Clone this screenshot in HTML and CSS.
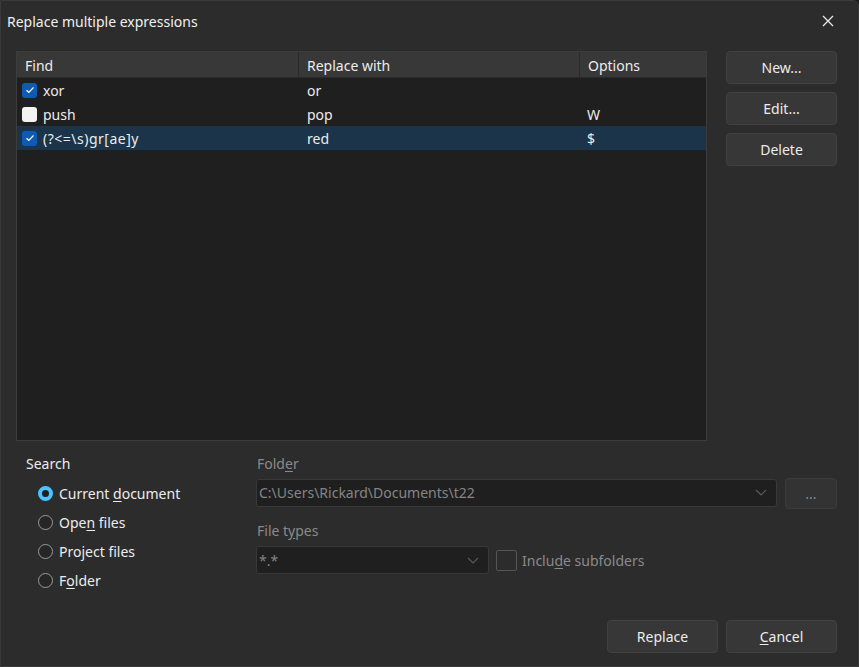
FILE: index.html
```html
<!DOCTYPE html>
<html>
<head>
<meta charset="utf-8">
<link rel="stylesheet" href="styles.css">
</head>
<body>
<div class="window">
  <div class="titlebar">
    <span class="title">Replace multiple expressions</span>
    <svg class="close" width="12" height="12" viewBox="0 0 12 12"><path d="M1 1L11 11M11 1L1 11" stroke="#e8e8e8" stroke-width="1.3" fill="none"/></svg>
  </div>
  <div class="top">
    <div class="table">
      <div class="thead">
        <div class="th c1">Find</div>
        <div class="th c2">Replace with</div>
        <div class="th c3">Options</div>
      </div>
      <div class="row">
        <div class="td c1"><span class="cb on"><svg width="10" height="8" viewBox="0 0 10 8"><path d="M1.5 4.2L3.8 6.3L8.5 1.5" stroke="#fff" stroke-width="1.2" fill="none"/></svg></span><span>xor</span></div>
        <div class="td c2">or</div>
        <div class="td c3"></div>
      </div>
      <div class="row">
        <div class="td c1"><span class="cb off"></span><span>push</span></div>
        <div class="td c2">pop</div>
        <div class="td c3">W</div>
      </div>
      <div class="row sel">
        <div class="td c1"><span class="cb on"><svg width="10" height="8" viewBox="0 0 10 8"><path d="M1.5 4.2L3.8 6.3L8.5 1.5" stroke="#fff" stroke-width="1.2" fill="none"/></svg></span><span class="rx">(?&lt;=\s)gr[ae]y</span></div>
        <div class="td c2">red</div>
        <div class="td c3">$</div>
      </div>
    </div>
    <div class="side">
      <button class="btn">New...</button>
      <button class="btn">Edit...</button>
      <button class="btn">Delete</button>
    </div>
  </div>
  <div class="bottom">
    <div class="search">
      <div class="label">Search</div>
      <div class="radios">
        <div class="radio"><span class="rb on"></span><span>Current <u>d</u>ocument</span></div>
        <div class="radio"><span class="rb"></span><span>Ope<u>n</u> files</span></div>
        <div class="radio"><span class="rb"></span><span>Pro<u>j</u>ect files</span></div>
        <div class="radio"><span class="rb"></span><span>F<u>o</u>lder</span></div>
      </div>
    </div>
    <div class="folder">
      <div class="label dim">Fold<u>e</u>r</div>
      <div class="frow first">
        <div class="combo wide"><span>C:\Users\Rickard\Documents\t22</span><svg width="12" height="7" viewBox="0 0 12 7"><path d="M1 1L6 6L11 1" stroke="#5a5a5a" stroke-width="1.2" fill="none"/></svg></div>
        <button class="btn small dimbtn">...</button>
      </div>
      <div class="label dim ft">File t<u>y</u>pes</div>
      <div class="frow">
        <div class="combo narrow"><span>*.*</span><svg width="12" height="7" viewBox="0 0 12 7"><path d="M1 1L6 6L11 1" stroke="#5a5a5a" stroke-width="1.2" fill="none"/></svg></div>
        <span class="cb2"></span><span class="dimtext">Inclu<u>d</u>e subfolders</span>
      </div>
    </div>
  </div>
  <div class="footer">
    <button class="btn">Replace</button>
    <button class="btn"><u>C</u>ancel</button>
  </div>
</div>
</body>
</html>
```
FILE: styles.css
```css
* { box-sizing: border-box; }
html, body { margin: 0; padding: 0; background: #1a1a1a; }
body { font-family: "Noto Sans", "Open Sans", sans-serif; font-size: 14px; color: #ececec; }
.window {
  width: 859px; height: 667px;
  background: #2c2c2c;
  border: 1px solid #3a3a3a;
  border-top-right-radius: 6px;
  display: flex; flex-direction: column;
  overflow: hidden;
}
.titlebar { height: 40px; display: flex; align-items: center; justify-content: space-between; padding: 0 24px 0 6px; }
.title { font-size: 14px; color: #f0f0f0; }
.top { display: flex; padding: 10px 21px 0 15px; gap: 19px; }
.table { width: 691px; height: 390px; background: #1f1f1f; border: 1px solid #3c3c3c; }
.thead { display: flex; height: 26px; background: #383838; border-bottom: 1px solid #2a2a2a; }
.th { display: flex; align-items: center; padding-left: 8px; padding-top: 1px; border-right: 1px solid #2a2a2a; color: #ececec; }
.c1 { width: 282px; }
.c2 { width: 281px; }
.c3 { flex: 1; }
.th.c3 { border-right: none; }
.row { display: flex; height: 24px; }
.row.sel { background: #1b3449; }
.td { display: flex; align-items: center; padding-left: 7px; }
.td.c1 { padding-left: 5px; }
.td.c2 { padding-left: 8px; }
.td.c3 { padding-left: 7px; }
.rx { letter-spacing: 0.5px; }
.cb { width: 15px; height: 15px; border-radius: 3px; margin-right: 6px; display: inline-flex; align-items: center; justify-content: center; }
.cb.on { background: #0e5ab4; }
.cb.off { background: #f3f3f3; }
.side { display: flex; flex-direction: column; gap: 8px; }
.btn {
  width: 111px; height: 33px;
  background: #373737; border: 1px solid #414141; border-radius: 4px;
  color: #ececec; font-family: inherit; font-size: 14px; padding: 0;
}
.bottom { display: flex; padding: 13px 0 0 25px; }
.search { width: 230px; }
.label { height: 20px; line-height: 20px; }
.radios { padding: 9px 0 0 12px; display: flex; flex-direction: column; gap: 8px; }
.radio { height: 21px; display: flex; align-items: center; }
.rb { width: 15px; height: 15px; border-radius: 50%; border: 1px solid #9a9a9a; background: #262626; margin-right: 6px; flex: none; }
.rb.on { border: 4px solid #4cc2ff; background: #1f1f1f; }
.folder { display: flex; flex-direction: column; }
.folder > .label { padding-left: 1px; }
.dim { color: #8a8a8a; }
.frow { display: flex; align-items: center; }
.frow.first { margin-top: 2px; }
.combo { height: 28px; background: #1f1f1f; border: 1px solid #393939; border-radius: 3px; display: flex; align-items: center; justify-content: space-between; padding: 0 9px 0 2px; color: #858585; }
.combo.wide { width: 521px; }
.combo.narrow { width: 233px; }
.btn.small { width: 52px; height: 31px; margin-left: 8px; margin-top: 2px; }
.dimbtn { color: #888; background: #333; border-color: #3b3b3b; }
.ft { margin-top: 12px; margin-bottom: 5px; }
.cb2 { width: 21px; height: 21px; border: 1px solid #555; margin-left: 7px; margin-right: 5px; border-radius: 2px; }
.dimtext { color: #8a8a8a; }
.footer { margin-top: auto; display: flex; justify-content: flex-end; gap: 8px; padding: 0 21px 13px 0; }
u { text-underline-offset: 2px; }
```
